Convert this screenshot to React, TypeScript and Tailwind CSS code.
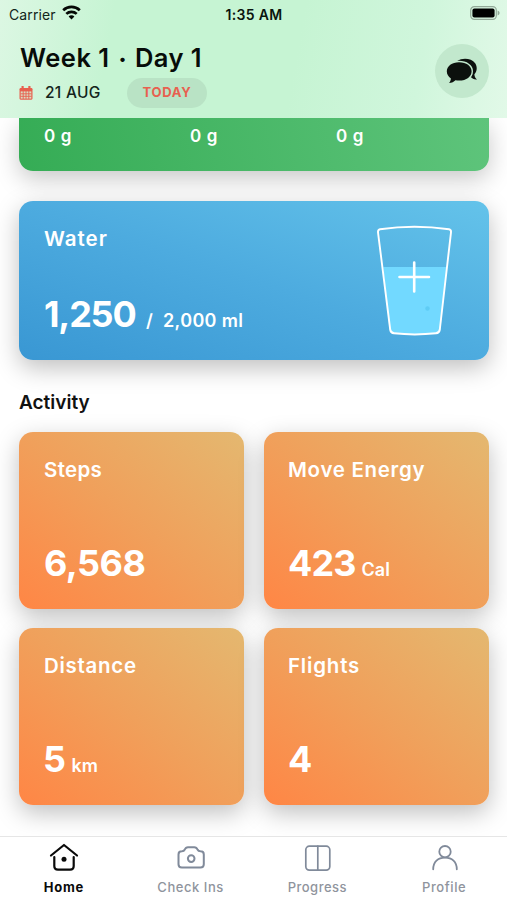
import React from 'react';

interface ActivityCardProps {
  title: string;
  value: string;
  unit?: string;
  titleClass: string;
  valueClass: string;
}

interface TabProps {
  label: string;
  labelClass: string;
  children: React.ReactNode;
}

const ActivityCard: React.FC<ActivityCardProps> = ({ title, value, unit, titleClass, valueClass }) => (
  <div className="flex h-[177px] flex-col justify-between rounded-[14px] bg-[linear-gradient(to_top_right,#ff8645_0%,#f0a05b_50%,#e4b870_100%)] px-[25px] pt-[27.5px] pb-[28px] text-white shadow-[0_8px_24px_rgba(0,0,0,0.25)]">
    <h3 className={`text-[20.5px] leading-none font-semibold whitespace-nowrap ${titleClass}`}>{title}</h3>
    <div className="flex items-baseline gap-[6px] leading-none">
      <span className={`text-[36px] leading-none font-bold ${valueClass}`}>{value}</span>
      {unit && <span className="text-[18px] leading-none font-semibold">{unit}</span>}
    </div>
  </div>
);

const Tab: React.FC<TabProps> = ({ label, labelClass, children }) => (
  <button type="button" className="flex flex-1 flex-col items-center pt-[5px]">
    <svg width="32" height="32" viewBox="0 0 32 32" fill="none" strokeLinecap="round" strokeLinejoin="round">
      {children}
    </svg>
    <span className={`mt-[7px] pl-px text-[13px] leading-none whitespace-nowrap ${labelClass}`}>{label}</span>
  </button>
);

const StatusBar = () => (
  <div className="grid h-[28px] grid-cols-3 items-center pr-[7px] pl-[9px] text-[14px] text-[#12251a]">
    <div className="flex items-center gap-[6px]">
      <span className="tracking-[0.1px]">Carrier</span>
      <svg className="-mt-[3px]" width="19" height="15" viewBox="0 0 19 15" fill="none" stroke="#050805" strokeWidth="2.7">
        <path d="M1.2 5.3C5.9 0.8 13.1 0.8 17.8 5.3" />
        <path d="M4.3 8.9C7.2 6.1 11.8 6.1 14.7 8.9" />
        <path d="M9.5 14.4L6.6 11.4C8.2 10 10.8 10 12.4 11.4Z" fill="#050805" stroke="none" />
      </svg>
    </div>
    <span className="-ml-px text-center font-semibold tracking-[0.3px] text-[#0a140e]">1:35 AM</span>
    <svg className="-mt-[2px] justify-self-end" width="30" height="14" viewBox="0 0 30 14">
      <rect x="0.7" y="0.7" width="25.6" height="12.6" rx="3.6" fill="none" stroke="#92a998" strokeWidth="1.2" />
      <rect x="2.4" y="2.4" width="22.2" height="9.2" rx="2" fill="#000" />
      <path d="M27.6 4.6C30.2 5.4 30.2 8.6 27.6 9.4Z" fill="#92a998" />
    </svg>
  </div>
);

const CalendarIcon = () => (
  <svg width="14" height="14" viewBox="0 0 14 14">
    <path d="M0.5 3.2Q0.5 2 1.7 2H12.3Q13.5 2 13.5 3.2V12.6Q13.5 13.7 12.3 13.7H1.7Q0.5 13.7 0.5 12.6Z" fill="#e8604f" />
    <path d="M3.6 0.6V3.4M10.4 0.6V3.4" stroke="#e8604f" strokeWidth="2.2" strokeLinecap="round" />
    <path d="M1.7 5.4H12.3V12.6H1.7Z" fill="#d9ddc2" />
    <path d="M4.2 5V13M7 5V13M9.8 5V13M1.5 7.8H12.5M1.5 10.3H12.5" stroke="#e8604f" strokeWidth="0.9" />
  </svg>
);

const ChatIcon = () => (
  <svg className="-mt-px" width="32" height="26" viewBox="0 0 32 26" fill="#0c100d">
    <path d="M11.5 2.8C16.5-0.5 25.5 0.1 29.2 5.2C31.6 8.9 31 13.2 28.4 16.3C28.4 18.4 29.4 20.6 31 21.4C28.6 21.8 26.2 20.6 24.4 18.8Z" />
    <path
      d="M13 4.2C6 4.2 0.8 8.1 0.8 13.2C0.8 16.2 2.4 18.8 4.9 20.4C4.8 22.2 4.1 23.7 2.9 25.1C5.9 24.8 7.9 23.7 9.4 22.2C10.7 22.5 11.9 22.6 13.3 22.6C20.4 22.6 25.6 18.6 25.6 13.2C25.6 8.1 20.4 4.2 13 4.2Z"
      stroke="#c2e8cd"
      strokeWidth="2.8"
      paintOrder="stroke"
    />
  </svg>
);

const WaterGlass = () => (
  <svg width="77" height="112" viewBox="0 0 77 112" fill="none">
    <path d="M7.2 42H70.8L64.4 105Q63.8 108.3 60.5 108.5Q39 110.5 17.5 108.5Q14.2 108.3 13.6 105Z" fill="#72d9ff" />
    <path
      d="M4 4.3Q38.5-0.7 73 4.3Q75.3 4.8 75 7.3L63.8 104.5Q63.3 108 60 108.3Q38.5 110.6 18 108.3Q14.7 108 14.2 104.5L2 7.3Q1.8 4.8 4 4.3Z"
      stroke="#fff"
      strokeWidth="1.9"
    />
    <path d="M38.2 37.5V66.5M23.5 52H53" stroke="#fff" strokeWidth="2.6" strokeLinecap="round" />
    <circle cx="51.5" cy="83.5" r="2.2" fill="#5fccf5" />
  </svg>
);

export default function App() {
  return (
    <div className="flex h-[900px] w-[507px] flex-col overflow-hidden bg-white font-[Inter,sans-serif]">
      <header className="h-[118px] shrink-0 bg-[linear-gradient(100deg,#dcf7e3_0%,#c6f4d3_22%,#c6f4d3_58%,#d0f6dc_82%,#e2f9e8_100%)]">
        <StatusBar />
        <div className="flex items-start justify-between pt-[16px] pr-[18px] pl-[19px]">
          <div>
            <h1 className="flex h-[34px] items-start pt-px pl-px text-[25.5px] leading-none font-semibold whitespace-nowrap text-[#070c09]">
              <span className="w-[99px] tracking-[0.5px]">Week 1</span>
              <span className="w-[16px] pt-[7px] text-[14px]">•</span>
              <span className="tracking-[0.4px]">Day 1</span>
            </h1>
            <div className="flex h-[30px] items-center">
              <CalendarIcon />
              <span className="ml-[12px] w-[82px] text-[15.5px] font-medium tracking-[0.3px] text-[#14251b]">21 AUG</span>
              <span className="flex h-[30px] w-[80px] items-center justify-center rounded-full bg-[#b9e3c5] text-[13px] font-bold tracking-[0.7px] text-[#e8604f]">
                TODAY
              </span>
            </div>
          </div>
          <button type="button" className="flex size-[54px] items-center justify-center rounded-full bg-[#c2e8cd]">
            <ChatIcon />
          </button>
        </div>
      </header>

      <main className="flex-1 overflow-hidden px-[19px]">
        <div className="mr-[-1px] grid h-[52.5px] grid-cols-[146px_146px_1fr] rounded-b-[14px] bg-[linear-gradient(78deg,#35ac55,#5ec47b)] pt-[10px] pl-[25px] text-[17px] leading-none font-semibold tracking-[0.6px] text-white shadow-[0_8px_24px_rgba(0,0,0,0.22)]">
          <span>0 g</span>
          <span>0 g</span>
          <span>0 g</span>
        </div>

        <section className="mt-[30.5px] mr-[-1px] flex h-[159px] justify-between rounded-[14px] bg-[linear-gradient(to_top_right,#3997d3_0%,#4dabdf_50%,#64c3ea_100%)] pr-[36px] pl-[25px] text-white shadow-[0_8px_24px_rgba(0,0,0,0.25)]">
          <div className="flex flex-col justify-between pt-[27.5px] pb-[28px]">
            <h2 className="text-[20.5px] leading-none font-semibold tracking-[1px]">Water</h2>
            <div className="flex items-baseline leading-none">
              <span className="w-[102px] text-[36px] leading-none font-bold tracking-[-1.2px]">1,250</span>
              <span className="w-[17px] text-[18px] font-semibold">/</span>
              <span className="text-[18px] font-semibold tracking-[0.35px]">2,000 ml</span>
            </div>
          </div>
          <div className="pt-[24px]">
            <WaterGlass />
          </div>
        </section>

        <h2 className="mt-[33px] text-[19px] leading-none font-semibold text-[#111]">Activity</h2>

        <div className="mt-[20px] mr-[-1px] grid grid-cols-2 gap-x-[20px] gap-y-[19px]">
          <ActivityCard title="Steps" value="6,568" titleClass="tracking-[0.3px]" valueClass="tracking-[-0.5px]" />
          <ActivityCard title="Move Energy" value="423" unit="Cal" titleClass="-ml-px tracking-[0.7px]" valueClass="-ml-px tracking-[-0.9px]" />
          <ActivityCard title="Distance" value="5" unit="km" titleClass="tracking-[0.7px]" valueClass="-ml-px tracking-[-0.5px]" />
          <ActivityCard title="Flights" value="4" titleClass="-ml-px tracking-[0.8px]" valueClass="-ml-px tracking-[-0.5px]" />
        </div>
      </main>

      <nav className="flex h-[64px] shrink-0 border-t border-[#e6e6e6] bg-white">
        <Tab label="Home" labelClass="font-bold tracking-[0.7px] text-[#0a0a0a]">
          <g stroke="#0a0a0a" strokeWidth="2.2">
            <path d="M4 13.5L17 3L30 13.5" />
            <path d="M7.3 15V24Q7.3 27.6 10.9 27.6H23.1Q26.7 27.6 26.7 24V15" />
          </g>
          <circle cx="17" cy="17.3" r="2.5" fill="#0a0a0a" />
        </Tab>
        <Tab label="Check Ins" labelClass="font-medium tracking-[0.55px] text-[#8f949d]">
          <g stroke="#808a9a" strokeWidth="2">
            <path d="M4.5 12.5Q4.5 9.3 7.8 9.3Q10 9.2 10.8 7.5Q11.7 5.2 14 5.2H20.3Q22.6 5.2 23.5 7.5Q24.3 9.2 26.5 9.3Q29.8 9.3 29.8 12.5V22.3Q29.8 25.5 26.5 25.5H7.8Q4.5 25.5 4.5 22.3Z" />
            <circle cx="17.2" cy="16.6" r="3.3" />
          </g>
        </Tab>
        <Tab label="Progress" labelClass="font-medium tracking-[0.5px] text-[#8f949d]">
          <g stroke="#808a9a" strokeWidth="1.7">
            <rect x="4.8" y="4.2" width="24" height="24" rx="3.6" />
            <path d="M16.8 4.2V28.2" />
          </g>
        </Tab>
        <Tab label="Profile" labelClass="font-medium tracking-[0.6px] text-[#8f949d]">
          <g stroke="#808a9a" strokeWidth="1.8">
            <circle cx="17" cy="9.7" r="5.7" />
            <path d="M5.2 27.3C5.2 19.8 10 15.6 17 15.6S28.8 19.8 28.8 27.3" />
          </g>
        </Tab>
      </nav>
    </div>
  );
}
